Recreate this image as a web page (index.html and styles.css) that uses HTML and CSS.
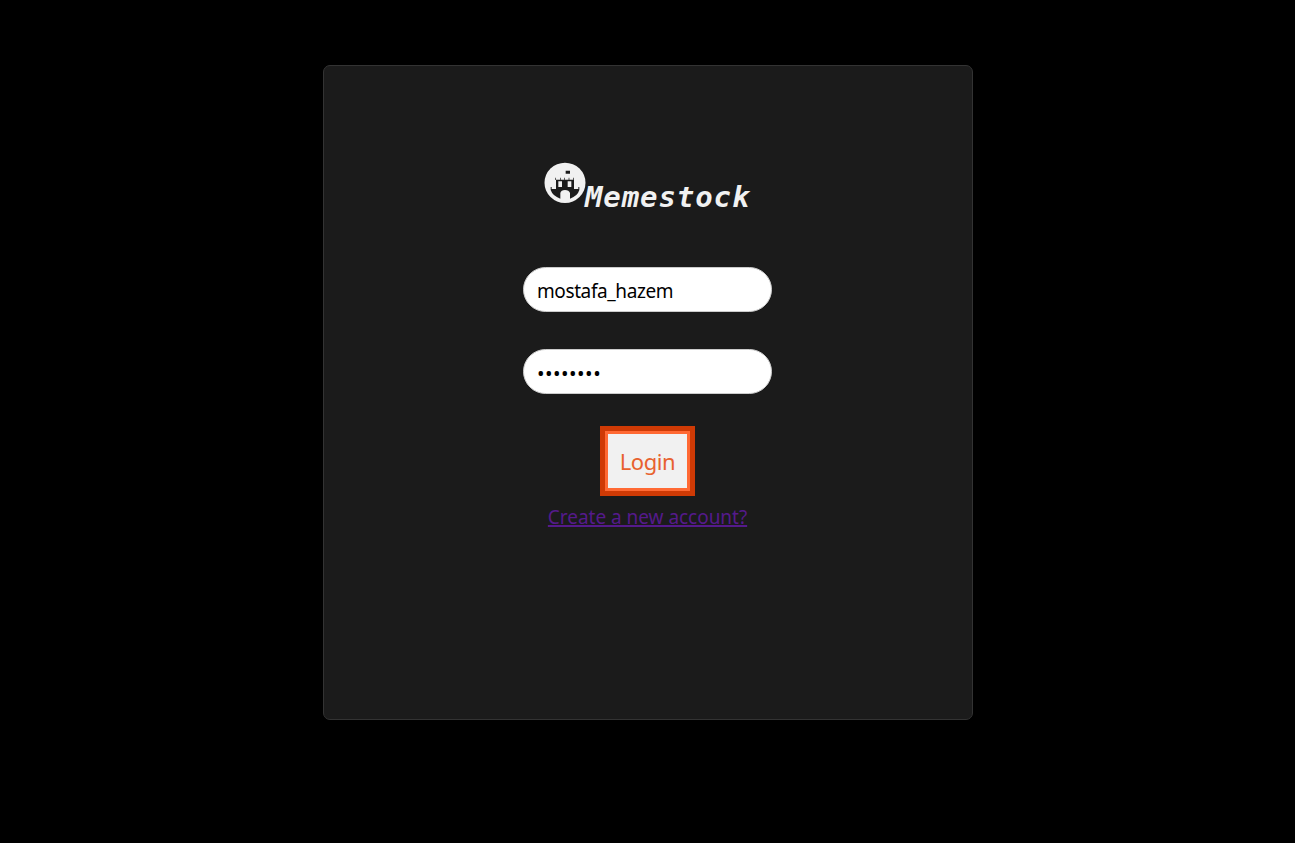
FILE: index.html
```html
<!DOCTYPE html>
<html lang="en">
<head>
<meta charset="utf-8">
<title>Memestock</title>
<link rel="stylesheet" href="styles.css">
</head>
<body>
<main class="card">
  <h1 class="brand">
    <svg class="logo" viewBox="27 21 126 126" aria-hidden="true">
      <ellipse cx="90" cy="83.500" rx="61.500" ry="60.500" fill="#f1f1f1"/>
      <path fill="#1b1b1b" d="M92 47h13v9H92zM61 68h2v6h12v-6h2v6h11v-6h2v6h11v-6h2v6h12v-6h2v34h13v-6h3v9Q128 123 105 131V114q-3-9-15-9t-14 9v17Q53 123 47 105V96h3v6h13V75h-2z"/>
      <path fill="#f1f1f1" d="M70 79h11v17H70zM98 79h11v17H98z"/>
    </svg>
    <span class="name">Memestock</span>
  </h1>
  <form class="form">
    <input class="field" type="text" value="mostafa_hazem" aria-label="Username">
    <input class="field password" type="password" value="password" aria-label="Password">
    <button class="login" type="button">Login</button>
  </form>
  <a class="signup" href="#">Create a new account?</a>
</main>
</body>
</html>
```
FILE: styles.css
```css
* { box-sizing: border-box; }
body {
  margin: 0;
  padding-top: 65px;
  background: #000;
  font-family: "Noto Sans", sans-serif;
}
.card {
  width: 650px;
  height: 655px;
  margin: 0 auto 0 323px;
  padding: 96px 1px 0 0;
  background: #1b1b1b;
  border: 1px solid #333;
  border-radius: 7px;
  display: flex;
  flex-direction: column;
  align-items: center;
}
.brand {
  display: flex;
  align-items: flex-start;
  width: 207px;
  height: 60px;
  margin: 0 0 45px;
}
.logo { width: 42px; height: 42px; flex: none; }
.name {
  margin: 16px 0 0 -1px;
  color: #f1f1f1;
  font: italic bold 29px/38px "DejaVu Sans Mono", monospace;
  letter-spacing: 0.9px;
}
.form {
  display: flex;
  flex-direction: column;
  align-items: center;
}
.field {
  width: 249px;
  height: 45px;
  margin: 0 0 37px;
  padding: 3px 13px 0;
  border: 1px solid #ccc;
  border-radius: 23px;
  background: #fff;
  color: #000;
  font: 19px "Noto Sans", sans-serif;
  letter-spacing: -0.4px;
  outline: none;
}
.password {
  margin-bottom: 32px;
  padding-top: 4px;
  font-size: 20px;
  letter-spacing: 0.5px;
}
.login {
  width: 95px;
  height: 70px;
  padding: 0;
  border: 5px solid #cf3a05;
  box-shadow: inset 0 0 0 3px #ff6933;
  background: #f1f1f1;
  color: #e8622f;
  font: 22px "Noto Sans", sans-serif;
  letter-spacing: -0.4px;
}
.signup {
  margin-top: 7px;
  color: #551a8b;
  font-size: 19px;
  line-height: 28px;
  letter-spacing: -0.03px;
  white-space: nowrap;
  text-decoration-thickness: 2px;
  text-underline-offset: 1px;
}
```
